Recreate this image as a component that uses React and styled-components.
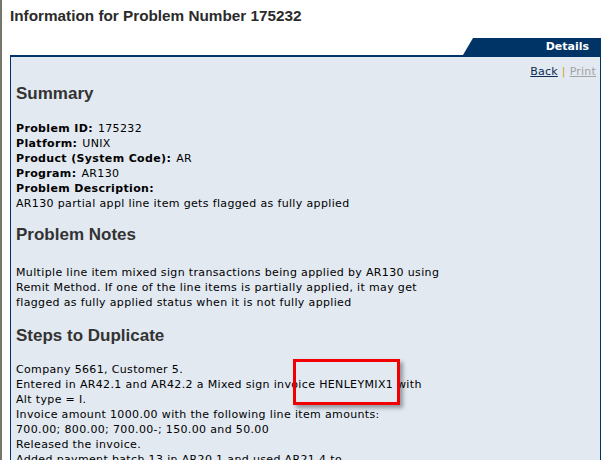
import styled, { createGlobalStyle } from 'styled-components'

const GlobalStyle = createGlobalStyle`
  html, body {
    margin: 0;
    padding: 0;
    background: #fff;
  }
  body {
    font-family: 'DejaVu Sans', Verdana, sans-serif;
    font-size: 11px;
    color: #000;
  }
`

const Page = styled.div`
  position: relative;
  width: 608px;
  height: 460px;
  overflow: hidden;
  border-left: 2px solid #77766a;
  box-sizing: border-box;
  padding: 0 7px 0 8px;
`

const Title = styled.h1`
  margin: 0;
  padding-top: 7px;
  height: 38px;
  box-sizing: border-box;
  font-family: 'Liberation Sans', Arial, sans-serif;
  font-size: 15.3px;
  font-weight: bold;
  color: #2b2b2b;
`

const TabRow = styled.div`
  display: flex;
  justify-content: flex-end;
`

const Tab = styled.div`
  width: 138px;
  height: 17px;
  background: #003366;
  color: #fff;
  font-weight: bold;
  font-size: 11px;
  line-height: 17px;
  text-align: right;
  padding-right: 12px;
  box-sizing: border-box;
  clip-path: polygon(10px 0, 100% 0, 100% 100%, 0 100%);
`

const Box = styled.div`
  background: #e2e9f1;
  border: 1px solid #003366;
  border-top-width: 2px;
  padding: 4px 4px 0 5px;
  height: 420px;
`

const Links = styled.div`
  text-align: right;
  line-height: 15px;
  padding-top: 3px;
  letter-spacing: 0.2px;
`

const Link = styled.a`
  color: ${({ $dim }) => ($dim ? '#a3a3a3' : '#0b2b52')};
  text-decoration: underline;
`

const Sep = styled.span`
  color: #c9a227;
  margin: 0 4px;
`

const Heading = styled.h2`
  margin: 0;
  font-family: 'Liberation Sans', Arial, sans-serif;
  font-size: 17px;
  font-weight: bold;
  color: #333;
  line-height: 20px;
  padding: ${({ $top }) => $top}px 0 ${({ $bottom }) => $bottom}px;
`

const Para = styled.div`
  line-height: 15px;
  letter-spacing: 0.35px;
`

const Label = styled.b`
  margin-right: 5px;
`

const Highlight = styled.div`
  position: absolute;
  left: 291px;
  top: 359px;
  width: 107px;
  height: 46px;
  border: 3px solid #f00000;
  box-sizing: border-box;
  box-shadow: 3px 3px 4px rgba(0, 0, 0, 0.35);
`

export default function App() {
  return (
    <>
      <GlobalStyle />
      <Page>
        <Title>Information for Problem Number 175232</Title>
        <TabRow>
          <Tab>Details</Tab>
        </TabRow>
        <Box>
          <Links>
            <Link href='#'>Back</Link>
            <Sep>|</Sep>
            <Link href='#' $dim>Print</Link>
          </Links>
          <Heading $top={5} $bottom={17}>Summary</Heading>
          <Para>
            <Label>Problem ID:</Label>175232<br />
            <Label>Platform:</Label>UNIX<br />
            <Label>Product (System Code):</Label>AR<br />
            <Label>Program:</Label>AR130<br />
            <Label>Problem Description:</Label><br />
            AR130 partial appl line item gets flagged as fully applied
          </Para>
          <Heading $top={14} $bottom={20}>Problem Notes</Heading>
          <Para>
            Multiple line item mixed sign transactions being applied by AR130 using<br />
            Remit Method. If one of the line items is partially applied, it may get<br />
            flagged as fully applied status when it is not fully applied
          </Para>
          <Heading $top={16} $bottom={16}>Steps to Duplicate</Heading>
          <Para>
            Company 5661, Customer 5.<br />
            Entered in AR42.1 and AR42.2 a Mixed sign invoice HENLEYMIX1 with<br />
            Alt type = I.<br />
            Invoice amount 1000.00 with the following line item amounts:<br />
            700.00; 800.00; 700.00-; 150.00 and 50.00<br />
            Released the invoice.<br />
            Added payment batch 13 in AR20.1 and used AR21.4 to
          </Para>
        </Box>
        <Highlight />
      </Page>
    </>
  )
}
